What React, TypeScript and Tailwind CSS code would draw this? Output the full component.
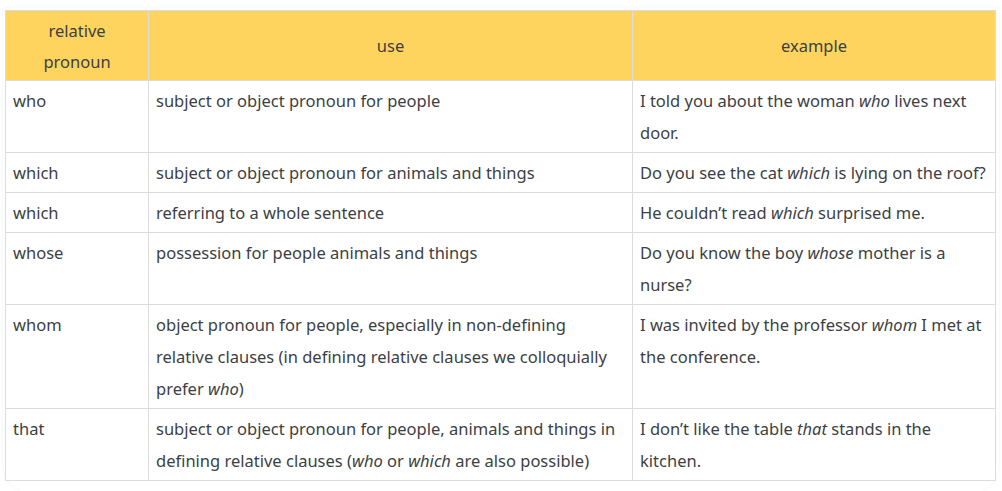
const ROWS: { pronoun: string; use: React.ReactNode; example: React.ReactNode }[] = [
  {
    pronoun: 'who',
    use: 'subject or object pronoun for people',
    example: (
      <>
        I told you about the woman <em>who</em> lives next door.
      </>
    ),
  },
  {
    pronoun: 'which',
    use: 'subject or object pronoun for animals and things',
    example: (
      <>
        Do you see the cat <em>which</em> is lying on the roof?
      </>
    ),
  },
  {
    pronoun: 'which',
    use: 'referring to a whole sentence',
    example: (
      <>
        He couldn’t read <em>which</em> surprised me.
      </>
    ),
  },
  {
    pronoun: 'whose',
    use: 'possession for people animals and things',
    example: (
      <>
        Do you know the boy <em>whose</em> mother is a nurse?
      </>
    ),
  },
  {
    pronoun: 'whom',
    use: (
      <>
        object pronoun for people, especially in non-defining relative clauses (in defining relative
        clauses we colloquially prefer <em>who</em>)
      </>
    ),
    example: (
      <>
        I was invited by the professor <em>whom</em> I met at the conference.
      </>
    ),
  },
  {
    pronoun: 'that',
    use: (
      <>
        subject or object pronoun for people, animals and things in defining relative clauses (
        <em>who</em> or <em>which</em> are also possible)
      </>
    ),
    example: (
      <>
        I don’t like the table <em>that</em> stands in the kitchen.
      </>
    ),
  },
]

const cell = 'border border-[#dcdcdc] align-top pl-[7px] pt-[4px] pb-[3px]'

export default function App() {
  return (
    <div
      className="w-[1002px] h-[491px] bg-white overflow-hidden"
      style={{ fontFamily: '"Noto Sans", "Open Sans", sans-serif' }}
    >
      <div className="mx-[3px] mt-[8px] pt-[2px] px-[2px] pb-[12px] rounded-b-[28px] bg-white shadow-[0_0_3px_rgba(0,0,0,0.06)]">
        {/* Table */}
        <table className="w-[990px] border-collapse table-fixed text-[16.5px] leading-[32px] text-[#3c3f44]">
          <colgroup>
            <col className="w-[143px]" />
            <col className="w-[484px]" />
            <col className="w-[363px]" />
          </colgroup>
          <thead>
            <tr className="bg-[#ffd45e] h-[70px]">
              <th className="border border-[#dcdcdc] font-normal text-center align-middle px-[24px] py-[3px] leading-[31px]">
                relative pronoun
              </th>
              <th className="border border-[#dcdcdc] font-normal text-center align-middle px-[8px]">use</th>
              <th className="border border-[#dcdcdc] font-normal text-center align-middle px-[8px]">example</th>
            </tr>
          </thead>
          <tbody>
            {ROWS.map((r, i) => (
              <tr key={i}>
                <td className={`${cell} pr-[6px]`}>{r.pronoun}</td>
                <td className={`${cell} pr-[10px]`}>{r.use}</td>
                <td className={`${cell} pr-[5px]`}>{r.example}</td>
              </tr>
            ))}
          </tbody>
        </table>
      </div>
    </div>
  )
}
